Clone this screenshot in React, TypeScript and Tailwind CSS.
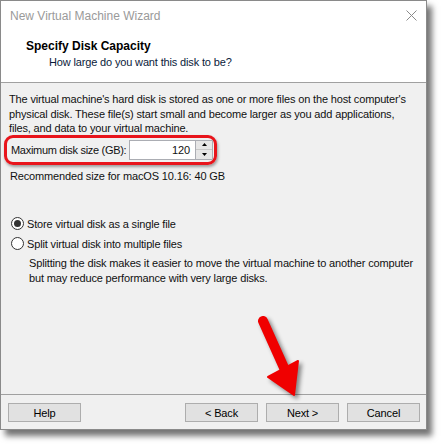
import React from 'react';

const font = { fontFamily: '"Liberation Sans", Arial, sans-serif' };

function Radio({ checked, label }: { checked?: boolean; label: string }) {
  return (
    <div className="flex items-center h-[20px]">
      <span className="w-[13px] h-[13px] rounded-full border border-[#333] bg-white flex items-center justify-center ml-[2px]">
        {checked && <span className="w-[7px] h-[7px] rounded-full bg-[#333]" />}
      </span>
      <span className="ml-[3px]">{label}</span>
    </div>
  );
}

function Btn({ label }: { label: string }) {
  return (
    <div className="w-[73px] h-[19px] border border-[#adadad] bg-[#e1e1e1] flex items-center justify-center text-[#000]">
      {label}
    </div>
  );
}

export default function App() {
  return (
    <div className="w-[442px] h-[444px] bg-white relative overflow-hidden" style={font}>
      <div className="w-[427px] h-[430px] border border-[#8a8a8a] flex flex-col shadow-[5px_6px_6px_rgba(0,0,0,0.55)] text-[11px] text-[#111] leading-[14px] tracking-[-0.15px] whitespace-nowrap">
        {/* title bar */}
        <div className="h-[29px] bg-white flex items-center justify-between pl-[9px] pr-[9px]">
          <span className="text-[#9a9a9a] text-[12px] tracking-normal">New Virtual Machine Wizard</span>
          <svg width="11" height="11" viewBox="0 0 11 11">
            <path d="M0.5 0.5 L10.5 10.5 M10.5 0.5 L0.5 10.5" stroke="#8a8a8a" strokeWidth="1" />
          </svg>
        </div>
        {/* header */}
        <div className="h-[53px] bg-white pt-[9px] border-b border-[#a0a0a0]">
          <div className="pl-[25px] font-bold text-[#000] text-[12px] leading-[15px] tracking-normal">Specify Disk Capacity</div>
          <div className="pl-[48px] leading-[16px] text-[#0a1a3a]">How large do you want this disk to be?</div>
        </div>
        {/* body */}
        <div className="flex-1 bg-[#f0f0f0] flex flex-col">
          <div className="px-[8px] pt-[9px]">
            <p className="leading-[14.5px]">
              The virtual machine's hard disk is stored as one or more files on the host computer's
              <br />
              physical disk. These file(s) start small and become larger as you add applications,
              <br />
              files, and data to your virtual machine.
            </p>
          </div>
          {/* highlighted field */}
          <div className="ml-[3px] mt-[-1px] w-[213px] h-[30px] border-[3px] border-[#e8141b] rounded-[9px] shadow-[1px_2px_3px_rgba(0,0,0,0.35)] flex items-center">
            <span className="w-[122px] pl-[4px] tracking-[-0.3px]">Maximum disk size (GB):</span>
            <div className="w-[67px] h-[20px] bg-white border border-[#abadb3] flex items-center justify-end pr-[5px]">
              120
            </div>
            <div className="w-[17px] h-[20px] flex flex-col border border-[#abadb3] border-l-0">
              <div className="flex-1 flex items-center justify-center border-b border-[#c8c8c8] bg-[#e6e6e6]">
                <svg width="5" height="3" viewBox="0 0 5 3">
                  <path d="M2.5 0 L5 3 L0 3 Z" fill="#000" />
                </svg>
              </div>
              <div className="flex-1 flex items-center justify-center bg-[#e6e6e6]">
                <svg width="5" height="3" viewBox="0 0 5 3">
                  <path d="M0 0 L5 0 L2.5 3 Z" fill="#000" />
                </svg>
              </div>
            </div>
          </div>
          <div className="mt-[4px] pl-[9px]">Recommended size for macOS 10.16: 40 GB</div>
          <div className="px-[8px] mt-[31px] flex flex-col">
            <Radio checked label="Store virtual disk as a single file" />
            <Radio label="Split virtual disk into multiple files" />
            <p className="pl-[20px] mt-[2px] leading-[15px]">
              Splitting the disk makes it easier to move the virtual machine to another computer
              <br />
              but may reduce performance with very large disks.
            </p>
          </div>
          <div className="flex-1" />
          <div className="border-t border-[#a0a0a0] h-[35px] flex items-start pt-[8px] pl-[7px] pr-[6px]">
            <Btn label="Help" />
            <div className="flex-1" />
            <div className="flex gap-[8px]">
              <Btn label="< Back" />
              <Btn label="Next >" />
              <Btn label="Cancel" />
            </div>
          </div>
        </div>
      </div>
      {/* red arrow annotation */}
      <svg
        className="absolute left-[240px] top-[300px]"
        width="80"
        height="110"
        viewBox="0 0 80 110"
        style={{ filter: 'drop-shadow(3px 3px 2px rgba(0,0,0,0.45))' }}
      >
        <path d="M23 21 L45 70" stroke="#f00000" strokeWidth="10" strokeLinecap="round" />
        <path d="M28 77 L58 61 L54 95 Z" fill="#f00000" stroke="#f00000" strokeWidth="2" strokeLinejoin="round" />
      </svg>
    </div>
  );
}
